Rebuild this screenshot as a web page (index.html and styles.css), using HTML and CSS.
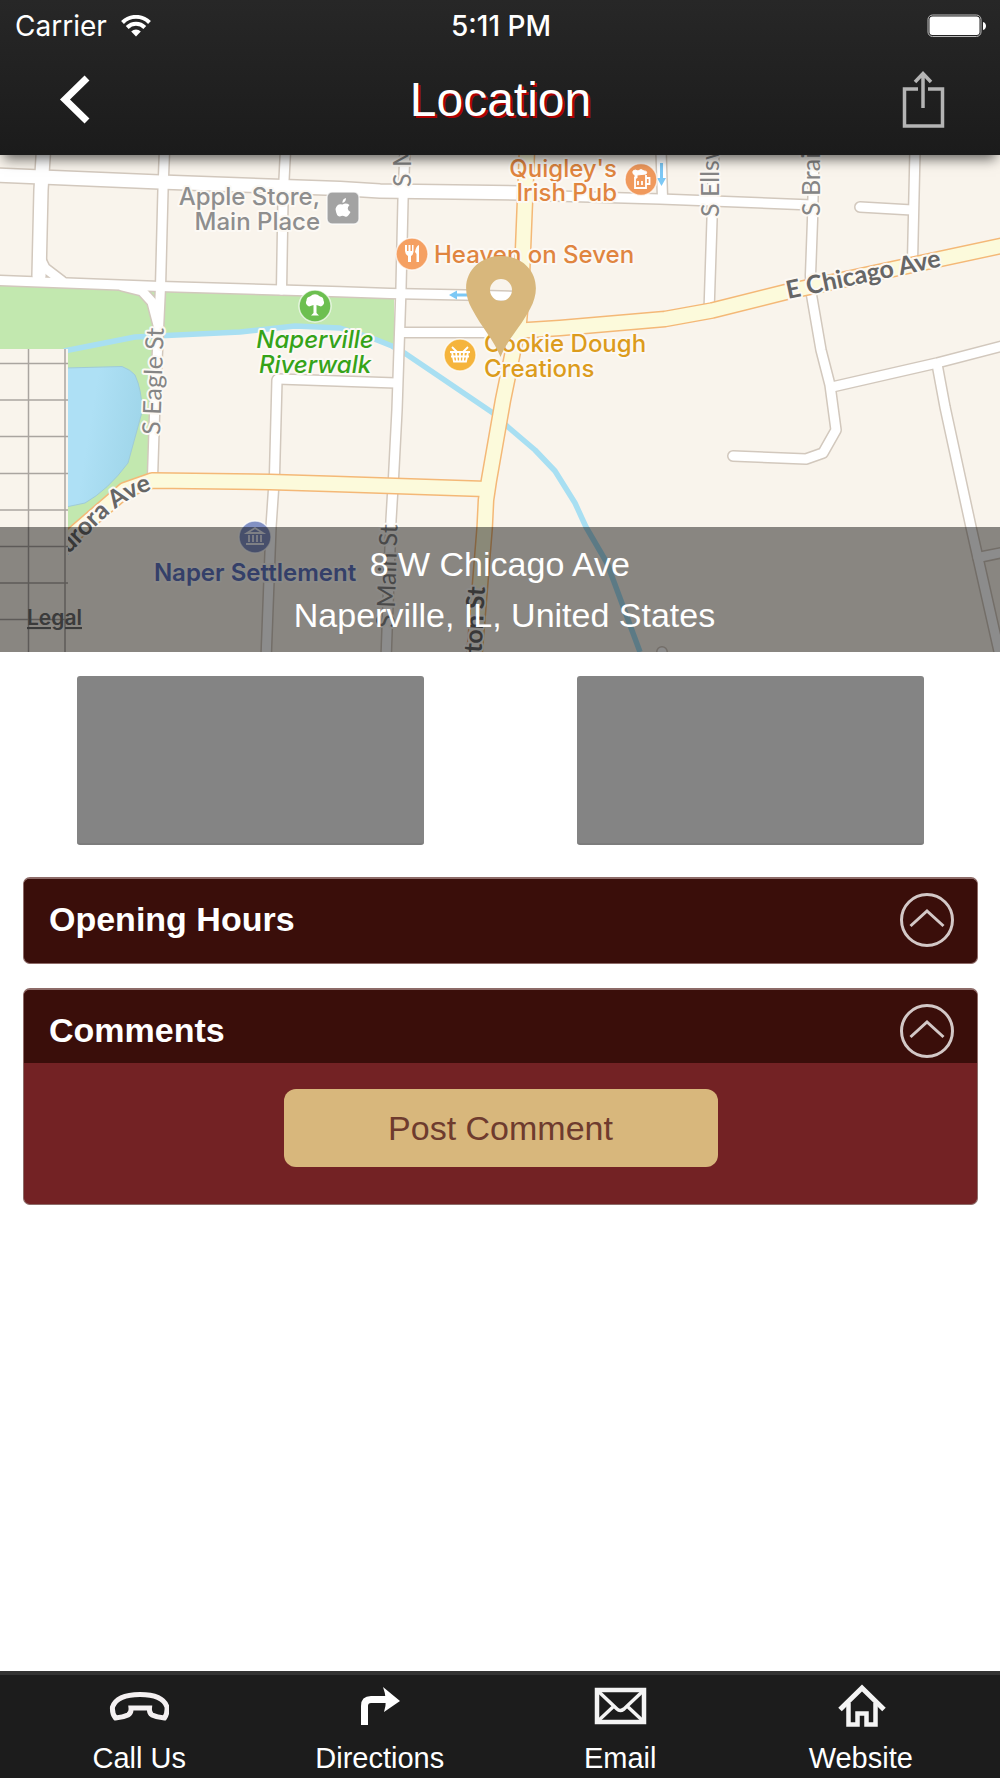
FILE: index.html
```html
<!DOCTYPE html>
<html lang="en">
<head>
<meta charset="utf-8">
<meta name="viewport" content="width=device-width, initial-scale=1">
<title>Location</title>
<link rel="stylesheet" href="styles.css">
</head>
<body>
<header class="top">
  <div class="status">
    <div class="carrier">
      <span>Carrier</span>
      <svg width="30" height="22" viewBox="0 0 30 22" aria-hidden="true">
        <g fill="none" stroke="#fff" stroke-width="4">
          <path d="M1.500 7.500A19 19 0 0 1 28.500 7.500"/>
          <path d="M6.200 12.500A12.400 12.400 0 0 1 23.800 12.500"/>
        </g>
        <path fill="#fff" d="M15 21.500L10.200 16.500A7 7 0 0 1 19.800 16.500Z"/>
      </svg>
    </div>
    <time class="clock">5:11 PM</time>
    <svg class="battery" width="60" height="24" viewBox="0 0 60 24" role="img" aria-label="Battery full">
      <rect x="1" y="1" width="53" height="21.500" rx="4.500" fill="none" stroke="#bbb" stroke-width="1"/>
      <rect x="2.500" y="2.500" width="50" height="18.500" rx="3" fill="#fff"/>
      <path fill="#fff" d="M56 8C60 9 60 15 56 16Z"/>
    </svg>
  </div>
  <div class="nav">
    <button class="icon-btn" aria-label="Back">
      <svg width="48" height="60" viewBox="0 0 48 60"><path d="M34 8L12 29.500L34 51" fill="none" stroke="#fff" stroke-width="7"/></svg>
    </button>
    <h1>Location</h1>
    <button class="icon-btn" aria-label="Share">
      <svg width="48" height="60" viewBox="0 0 48 60" fill="none" stroke="#b4b4b4" stroke-width="3.500">
        <path d="M18 19H4.500V56H42.500V19H28"/><path d="M23 38V4M15 12L23 3.500L31 12"/>
      </svg>
    </button>
  </div>
</header>

<main>
  <section class="map" aria-label="Map">
    <svg class="map-art" viewBox="0 155 1000 497">
      <defs>
        <linearGradient id="lake" x1="0" y1="0" x2="1" y2="0.300">
          <stop offset="0.400" stop-color="#aee0f5"/><stop offset="1" stop-color="#a0d6ea"/>
        </linearGradient>
        <path id="aurora" d="M40 580L76 547C100 522 120 498 158 488"/>
        <g id="minor">
          <path d="M39 256L45 268L62 281"/>
          <path d="M0 280.500L120 285L160 286.500L340 291.700L390 293.500L465 295L522 296.500"/>
          <path d="M164.500 150L163 190L160.500 287L158 340L155 400L152.500 478"/>
          <path d="M122 286L142 291L152 302L158 325"/>
          <path d="M285.500 150L283 200L281.500 290"/>
          <path d="M405 150L403 200L401 288L397 410L393.500 478L391 520L386 660"/>
          <path d="M400 332.500H515"/>
          <path d="M278 379L396 383"/>
          <path d="M277 380L274.500 475L271 527L266 660"/>
          <path d="M520 195L660 199L812 205"/>
          <path d="M661 150L662.500 198"/>
          <path d="M714 150L712 220L709 312"/>
          <path d="M814 150L812.500 220L810.500 275L811 292L821 350L830 385L836 430L823 453L806 459L733 456"/>
          <path d="M832 387L937 363L1010 344"/>
          <path d="M937 364L945 407L971 527L1001 660"/>
          <path d="M978 557.500L1010 551"/>
          <path d="M915 150L912.500 262"/>
          <path d="M860 207L912 210"/>
          <path d="M662 652V670"/>
        </g>
        <g id="medium">
          <path d="M-5 175L160 182L340 188.500L380 191L520 193"/>
          <path d="M43.500 150L41 190L39 276"/>
        </g>
        <g id="major">
          <path d="M527 150L525 200L521 300L519 322L503 400L489 480L486 500L484.700 527L474 660"/>
          <path d="M513 331L560 328L665 319L712 310.500L786 292L1010 244"/>
          <path d="M486 489L335 484L270 482L152 480.500L125 490L60 546"/>
        </g>
      </defs>
      <rect x="0" y="155" width="1000" height="497" fill="#f9f4ec"/>
      <path fill="#c2e8af" d="M0 282L120 287L390 297L394 298V346L370 337L340 328L295 326L240 332L160 335L153 482L125 490L68 540V350H0Z"/>
      <path fill="url(#lake)" stroke="#9fcbd8" d="M66 368L122 366.500Q131 370 135 375Q142 390 142 412L128 463Q108 490 85 503L66 507Z"/>
      <path fill="none" stroke="#a8dff2" stroke-width="5.500" stroke-linejoin="round" d="M64 351L135 337L240 332L295 326L340 328L372 338L392 346L406 354L440 377L493 413L508 427L535 450L555 471L575 503L586 527L607 563L640 652"/>

      <g fill="none" stroke-linejoin="round" stroke-linecap="round">
        <use href="#minor" stroke="#d2c8bd" stroke-width="12"/>
        <use href="#medium" stroke="#d2c8bd" stroke-width="16"/>
        <use href="#minor" stroke="#fff" stroke-width="9"/>
        <use href="#medium" stroke="#fff" stroke-width="13"/>
        <use href="#major" stroke="#f4b877" stroke-width="17"/>
        <use href="#major" stroke="#fcfadb" stroke-width="14"/>
      </g>

      <g stroke="#7cc8f5" stroke-width="3" fill="#7cc8f5">
        <path d="M661.500 163V180"/><path stroke="none" d="M657 178H666L661.500 186Z"/>
        <path d="M455 295H468"/><path stroke="none" d="M449 295L457 290.500V299.500Z"/>
      </g>

      <g class="road-label">
        <text transform="translate(411 187) rotate(-90)">S Main St</text>
        <text transform="translate(719 217) rotate(-90)">S Ellsworth St</text>
        <text transform="translate(820 216) rotate(-90)">S Brainard St</text>
        <text transform="translate(160 435) rotate(-88)">S Eagle St</text>
        <text transform="translate(394 628) rotate(-88)">S Main St</text>
        <g class="strong">
          <text transform="translate(485 587) rotate(-87)" text-anchor="end">Washington St</text>
          <text transform="translate(788 299) rotate(-12)">E Chicago Ave</text>
          <text text-anchor="end"><textPath href="#aurora" startOffset="96%">Aurora Ave</textPath></text>
        </g>
      </g>

      <rect x="0" y="349" width="68" height="303" fill="#f9f4ec"/>
      <g fill="none" stroke="#aaa5a0" stroke-width="1.500">
        <path d="M28.500 349V652M65 349V652"/>
        <path d="M0 363.500H68M0 400H68M0 436.500H68M0 473.500H68M0 510H68M0 546.500H68M0 583H68M0 619.500H68"/>
      </g>

      <g class="poi">
        <g fill="#8e8e8e" text-anchor="end"><text x="320" y="205">Apple Store,</text><text x="320" y="230">Main Place</text></g>
        <g fill="#e0853f" text-anchor="end"><text x="617" y="177">Quigley's</text><text x="617" y="201">Irish Pub</text></g>
        <text x="434" y="263" fill="#e0853f">Heaven on Seven</text>
        <g fill="#dc9c1c"><text x="484" y="352">Cookie Dough</text><text x="484" y="377">Creations</text></g>
        <g fill="#35a318" text-anchor="middle" font-style="italic"><text x="315" y="348">Naperville</text><text x="315" y="373">Riverwalk</text></g>
        <text x="255" y="581" fill="#6074bf" text-anchor="middle" class="bold">Naper Settlement</text>
      </g>

      <g stroke="#fff" stroke-opacity="0.700" stroke-width="1.500">
        <circle cx="315" cy="306" r="16" fill="#6cbf50"/>
        <circle cx="412" cy="254" r="16" fill="#f5a062"/>
        <circle cx="641" cy="179.500" r="16" fill="#f0995c"/>
        <circle cx="460" cy="355" r="16" fill="#f5b43c"/>
        <circle cx="255" cy="537" r="16" fill="#8291c4"/>
        <rect x="327" y="192" width="32" height="32" rx="5" fill="#a3a3a3"/>
      </g>
      <g fill="#fff">
        <path d="M313.500 305L309 306.500Q304.500 304 306.500 300.500Q306.500 297 310 296.500Q315 292 320 296.500Q323.500 297 323.500 300.500Q325.500 304 321 306.500L316.500 305L316.500 313L319 315.500H311L313.500 313Z"/>
        <path d="M405 245H407V251H408.500V245H410.500V251H412V245H413.500V252Q413 255 411 256V262H408V256Q405 254 405 251ZM415 252Q416 246 419 245V262H416.500V254Z"/>
        <path d="M346 198Q346 202 342.500 203Q342 199 346 198ZM342.500 204.500Q346 202.500 349.500 205Q345.500 209 350.500 212Q347.500 218 345 216.500Q342.500 215 340 216.500Q336.500 217 335.500 209Q337 203 342.500 204.500Z"/>
      </g>
      <g fill="none" stroke="#fff" stroke-width="1.800">
        <path d="M635 177V188H646V175M646 178H649.500V184H646M638 181V185M642 181V185"/>
        <path fill="#fff" d="M633 171Q635 169 638 171Q641 168 644 171Q648 171 646 174L637 175V178H635V175Q632 174 633 171Z" stroke-width="1"/>
        <path d="M450 352H470M452 352L454 361.500H466L468 352M451 356.500H469M456 352L457 361M460 352V361M464 352L463 361M452 347L457 352M468 347L463 352"/>
      </g>
      <g fill="none" stroke="#fff" stroke-opacity="0.800" stroke-width="1.800">
        <path d="M247 533L255 528L263 533ZM246 544H264M249 535V542M253 535V542M257 535V542M261 535V542"/>
      </g>

      <path fill="#d8b77c" fill-rule="evenodd" d="M500.500 357C494 340 482 328 472 309C456 280 475 256 501 256C527 256 546 280 530 309C520 328 507 340 500.500 357ZM501 279A11 11 0 1 0 501 301A11 11 0 1 0 501 279Z"/>
      <a href="#legal"><text class="legal" x="27" y="625">Legal</text></a>
    </svg>
    <p class="address">8 W Chicago Ave&nbsp;<br>Naperville, IL, United States</p>
  </section>

  <div class="photos">
    <div class="photo"></div>
    <div class="photo"></div>
  </div>

  <div class="panels">
    <section class="panel hours">
      <div class="panel-head">
        <h2>Opening Hours</h2>
        <button class="toggle" aria-label="Toggle opening hours">
          <svg width="54" height="54" viewBox="0 0 54 54" fill="none" stroke="#d3c8c7"><circle cx="27" cy="27" r="25.500" stroke-width="3"/><path d="M10.500 33L27 18L43.500 33" stroke-width="3"/></svg>
        </button>
      </div>
    </section>
    <section class="panel comments">
      <div class="panel-head">
        <h2>Comments</h2>
        <button class="toggle" aria-label="Toggle comments">
          <svg width="54" height="54" viewBox="0 0 54 54" fill="none" stroke="#d3c8c7"><circle cx="27" cy="27" r="25.500" stroke-width="3"/><path d="M10.500 33L27 18L43.500 33" stroke-width="3"/></svg>
        </button>
      </div>
      <div class="panel-body">
        <button class="post">Post Comment</button>
      </div>
    </section>
  </div>
</main>

<nav class="tabs">
  <a href="#call">
    <svg width="60" height="48" viewBox="0 0 60 48" fill="none" stroke="#f4f0f1" stroke-width="5"><path d="M6.500 34Q3 30 3.500 23Q8 10.500 31 10.500Q54 10.500 58 23Q58.500 30 55.500 34Q48 33.500 43 31Q40 29 40.500 24H22Q22.500 29 19 31Q14 33.500 6.500 34Z"/></svg>
    <span>Call Us</span>
  </a>
  <a href="#directions">
    <svg width="60" height="48" viewBox="0 0 60 48"><path d="M14.500 41V22Q14.500 15.500 21 15.500H38" fill="none" stroke="#fff" stroke-width="7"/><path fill="#fff" d="M33 3L50 17L34 28Q38 16 33 3Z"/></svg>
    <span>Directions</span>
  </a>
  <a href="#email">
    <svg width="60" height="48" viewBox="0 0 60 48" fill="none" stroke="#f4f4f4"><rect x="7" y="6" width="47" height="32" stroke-width="4.500"/><path d="M8 7L27 25Q30 28 34 25L53 7M8 37L24 22M53 37L37 22" stroke-width="3.500"/></svg>
    <span>Email</span>
  </a>
  <a href="#website">
    <svg width="60" height="48" viewBox="0 0 60 48" fill="none" stroke="#f4f4f4" stroke-width="4.500"><path d="M9 25.500L31 4L53 25.500" stroke-width="5"/><path d="M17.500 19V40.500H26.500V29.500H35.500V40.500H44.500V19"/></svg>
    <span>Website</span>
  </a>
</nav>
</body>
</html>
```

FILE: styles.css
```css
* { box-sizing: border-box; }

body {
  margin: 0;
  min-height: 100vh;
  display: flex;
  flex-direction: column;
  background: #fff;
  color: #fff;
  font-family: "Liberation Sans", Arial, sans-serif;
}

button {
  border: 0;
  padding: 0;
  background: none;
  color: inherit;
  font: inherit;
  cursor: pointer;
}

svg { display: block; }
main { flex: 1; }

/* Status and navigation bars */
.top {
  position: relative;
  z-index: 1;
  background: linear-gradient(#272727, #1b1b1b);
  box-shadow: 0 8px 12px -4px rgba(0, 0, 0, 0.6);
}
.status {
  display: grid;
  grid-template-columns: 1fr auto 1fr;
  align-items: center;
  height: 51px;
  padding: 0 13px 0 15px;
  font: 28px "Inter", sans-serif;
}
.carrier { display: flex; align-items: center; gap: 14px; }
.clock { font-weight: 500; }
.battery { justify-self: end; }
.nav {
  display: flex;
  align-items: center;
  justify-content: space-between;
  height: 104px;
  padding: 0 52px 6px 53px;
}
.nav h1 {
  margin: 0;
  font-size: 48px;
  line-height: 56px;
  font-weight: 400;
  text-shadow: 2px 2px 0 #b00000;
}

/* Map */
.map { position: relative; }
.map-art { width: 100%; height: auto; overflow: hidden; }
.map text {
  paint-order: stroke;
  stroke: #fcf9f4;
  stroke-width: 4px;
  stroke-linejoin: round;
}
.poi { font-family: Inter, sans-serif; font-size: 24px; font-weight: 500; }
.poi .bold { font-weight: 600; }
.road-label { font-family: Lato, sans-serif; font-size: 25px; fill: #858585; }
.road-label .strong { fill: #666; font-weight: 700; }
.map .legal {
  fill: #6c6c6c;
  stroke: none;
  font-family: Inter, sans-serif;
  font-size: 21px;
  font-weight: 600;
  text-decoration: underline;
}
.address {
  position: absolute;
  right: 0;
  bottom: 0;
  left: 0;
  margin: 0;
  padding: 12px 0 11px 9px;
  background: rgba(0, 0, 0, 0.45);
  font-size: 34px;
  line-height: 51px;
  text-align: center;
}

/* Photo slots */
.photos {
  display: flex;
  gap: 153px;
  padding: 24px 76px 32px 77px;
}
.photo {
  flex: 1;
  height: 169px;
  border-bottom: 2px solid #7c7c7c;
  border-radius: 3px;
  background: #848484;
}

/* Panels */
.panels {
  display: flex;
  flex-direction: column;
  gap: 24px;
  padding: 0 22px 24px 23px;
}
.panel {
  border: 1px solid #8d6b68;
  border-top-width: 2px;
  border-radius: 7px;
  overflow: hidden;
}
.hours { padding-bottom: 11px; background: #3a0e0a; }
.comments { background: #732224; }
.panel-head {
  display: flex;
  align-items: center;
  justify-content: space-between;
  padding: 14px 23px 5px 25px;
  background: #3a0e0a;
}
.panel-head h2 {
  margin: 0;
  padding-bottom: 2px;
  font-size: 34px;
  line-height: 40px;
}
.panel-body {
  display: flex;
  justify-content: center;
  padding: 26px 0 37px;
}
.post {
  width: 434px;
  height: 78px;
  border-radius: 12px;
  background: #d8b77c;
  color: #6e3b2e;
  font-size: 34px;
}

/* Bottom tabs */
.tabs {
  display: grid;
  grid-template-columns: repeat(4, 1fr);
  padding: 9px 19px 3px;
  border-top: 4px solid #333;
  background: #1c1c1c;
}
.tabs a {
  display: flex;
  flex-direction: column;
  align-items: center;
  gap: 10px;
  color: #fff;
  font-size: 29px;
  line-height: 33px;
  text-decoration: none;
}
```
